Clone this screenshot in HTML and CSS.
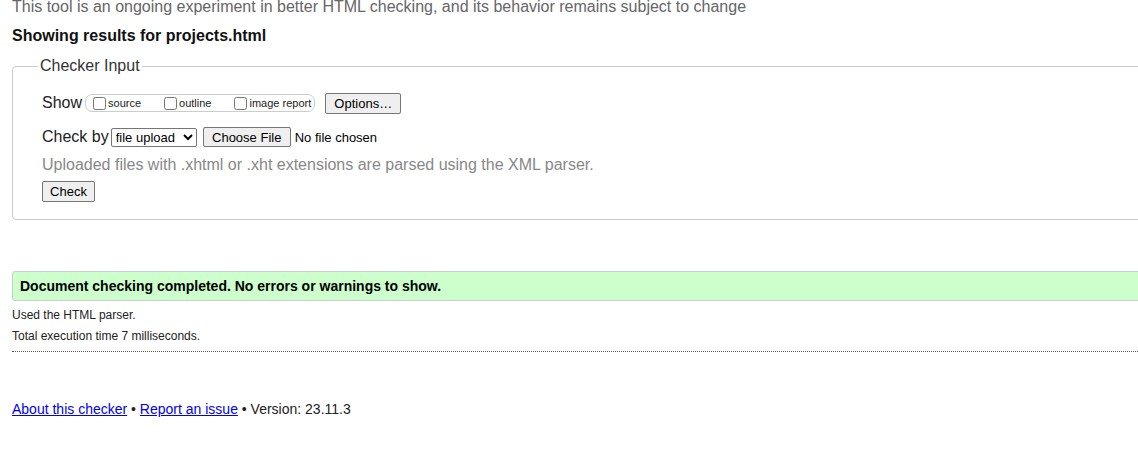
FILE: index.html
```html
<!DOCTYPE html>
<html>
<head>
<meta charset="utf-8">
<title>Nu Html Checker</title>
<link rel="stylesheet" href="styles.css">
</head>
<body>
<div class="page">
  <p class="intro">This tool is an ongoing experiment in better HTML checking, and its behavior remains subject to change</p>
  <p class="showing">Showing results for projects.html</p>
  <fieldset class="checker">
    <legend class="legend">Checker Input</legend>
    <div class="row row-show">
      <span class="lbl">Show</span>
      <span class="opts">
        <label class="opt"><input type="checkbox" class="cb">source</label>
        <label class="opt"><input type="checkbox" class="cb">outline</label>
        <label class="opt"><input type="checkbox" class="cb">image report</label>
      </span>
      <button class="btn btn-options" type="button">Options…</button>
    </div>
    <div class="row row-check">
      <span class="lbl">Check by</span>
      <select class="sel"><option>file upload</option></select>
      <button class="btn btn-file" type="button">Choose File</button>
      <span class="nofile">No file chosen</span>
    </div>
    <p class="hint">Uploaded files with .xhtml or .xht extensions are parsed using the XML parser.</p>
    <div class="row row-submit">
      <button class="btn btn-check" type="button">Check</button>
    </div>
  </fieldset>
  <div class="success">Document checking completed. No errors or warnings to show.</div>
  <p class="meta">Used the HTML parser.</p>
  <p class="meta">Total execution time 7 milliseconds.</p>
  <div class="sep"></div>
  <p class="footer"><a href="#" class="link">About this checker</a> • <a href="#" class="link">Report an issue</a> • Version: 23.11.3</p>
</div>
</body>
</html>
```
FILE: styles.css
```css
html, body {
  margin: 0;
  padding: 0;
  overflow: hidden;
  background: #fff;
}
body {
  font-family: "Liberation Sans", Arial, sans-serif;
  color: #222;
}
.page {
  width: 1250px;
  padding-left: 12px;
}
.intro {
  margin: -2px 0 0 0;
  font-size: 16px;
  line-height: 18px;
  color: #666;
}
.showing {
  margin: 11px 0 0 0;
  font-size: 16px;
  line-height: 18px;
  font-weight: bold;
  color: #111;
}
.checker {
  margin: 12px 0 0 0;
  border: 1px solid #ccc;
  border-radius: 4px;
  padding: 0 0 17px 29px;
}
.legend {
  margin-left: -4px;
  padding: 0 2px;
  font-size: 16px;
  color: #333;
}
.row {
  display: flex;
  align-items: center;
}
.row-show {
  margin-top: 18px;
  height: 20px;
}
.lbl {
  font-size: 16px;
  color: #222;
}
.opts {
  display: flex;
  align-items: center;
  margin-left: 3px;
  height: 16px;
  padding: 0 3px 0 4px;
  border: 1px solid #ccc;
  border-radius: 7px;
}
.opt {
  display: flex;
  align-items: center;
  font-size: 11px;
  margin-right: 20px;
}
.opt:last-child {
  margin-right: 0;
}
.cb {
  margin: 0 2px 0 3px;
  width: 13px;
  height: 13px;
}
.btn {
  font-family: "Liberation Sans", Arial, sans-serif;
  font-size: 13px;
  background: #efefef;
  border: 1px solid #767676;
  border-radius: 2px;
  color: #000;
  padding: 1px 6px;
  height: 21px;
}
.btn-options {
  margin-left: 10px;
  width: 76px;
}
.row-check {
  margin-top: 14px;
  height: 20px;
}
.sel {
  font-family: "Liberation Sans", Arial, sans-serif;
  font-size: 13px;
  margin-left: 2px;
  height: 19px;
  width: 86px;
  border: 1px solid #767676;
  border-radius: 2px;
  background: #fff;
  color: #000;
  padding: 0;
}
.btn-file {
  margin-left: 6px;
  width: 88px;
  height: 20px;
  padding: 0 6px;
}
.nofile {
  margin-left: 4px;
  font-size: 13px;
  color: #000;
}
.hint {
  margin: 9px 0 0 0;
  font-size: 16px;
  line-height: 18px;
  color: #888;
}
.row-submit {
  margin-top: 7px;
}
.btn-check {
  width: 53px;
  height: 21px;
  padding: 0;
}
.success {
  margin-top: 51px;
  border: 1px solid #ccc;
  border-radius: 3px;
  background: #ccffcc;
  padding: 6px 7px;
  font-size: 14px;
  line-height: 16px;
  font-weight: bold;
  color: #000;
}
.meta {
  margin: 7px 0 0 0;
  font-size: 12px;
  line-height: 14px;
  color: #222;
}
.meta + .meta {
  margin-top: 7px;
}
.sep {
  margin-top: 8px;
  border-top: 1px dotted #555;
}
.footer {
  margin: 49px 0 0 0;
  font-size: 14px;
  line-height: 16px;
  color: #222;
}
.link {
  color: #0000ee;
}
```
